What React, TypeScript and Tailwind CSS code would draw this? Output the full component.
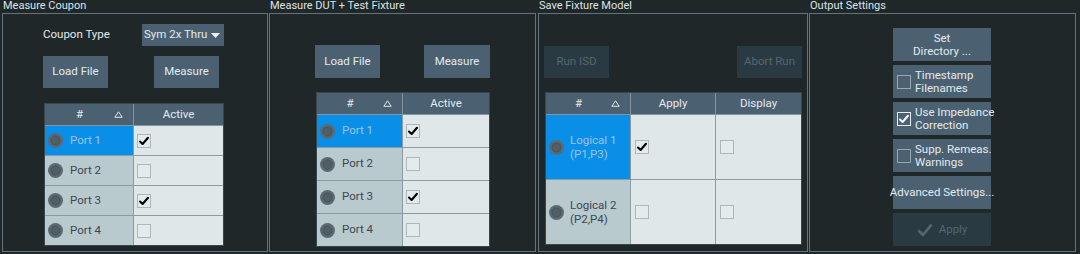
import React from "react";

const Circle = () => (
  <svg width="15" height="15" viewBox="0 0 15 15" className="shrink-0">
    <circle cx="7.5" cy="7.5" r="7.5" fill="#5c6971" />
    <circle cx="7.5" cy="7.5" r="4.5" fill="#515e66" stroke="#48545b" strokeWidth="1" />
  </svg>
);

const CheckMark = ({ color = "#000" }: { color?: string }) => (
  <svg width="12" height="12" viewBox="0 0 12 12">
    <path d="M2 6.5 L4.6 9 L10 2.8" fill="none" stroke={color} strokeWidth="2.1" strokeLinecap="round" strokeLinejoin="round" />
  </svg>
);

const TableCheck = ({ checked }: { checked: boolean }) => (
  <div className="w-[14px] h-[14px] border border-[#aab7bd] bg-[#e4ebed] flex items-center justify-center shrink-0">
    {checked && <CheckMark />}
  </div>
);

const SortTri = () => (
  <svg width="9" height="7" viewBox="0 0 9 7" className="shrink-0">
    <polygon points="4.5,0.8 8.2,6.3 0.8,6.3" fill="none" stroke="#dfe7ea" strokeWidth="1" />
  </svg>
);

const Btn = ({ children, className = "" }: { children: React.ReactNode; className?: string }) => (
  <div className={"bg-[#4b6171] text-[#e3eaed] flex items-center justify-center " + className}>{children}</div>
);

const DisBtn = ({ children, className = "" }: { children: React.ReactNode; className?: string }) => (
  <div className={"bg-[#293a42] text-[#56676f] flex items-center justify-center " + className}>{children}</div>
);

const Panel = ({ title, w, children }: { title: string; w: string; children: React.ReactNode }) => (
  <div className={"flex flex-col shrink-0 " + w}>
    <div className="h-[13px] leading-[12px] pl-[1px] text-[11px] text-[#dce4e7] whitespace-nowrap">{title}</div>
    <div className="h-[239px] border border-[#62737b] flex flex-col">{children}</div>
  </div>
);

const Header = ({ first, rest }: { first: string; rest: { label: string; w: string }[] }) => (
  <div className="flex h-[22px] bg-[#4b6171] border-b border-[#8696a0] text-[#e3eaed]">
    <div className={"flex items-center border-r border-[#8393a0] " + first}>
      <div className="flex-1 text-center">#</div>
      <div className="mr-[10px]"><SortTri /></div>
    </div>
    {rest.map((c, i) => (
      <div key={i} className={"flex items-center justify-center " + c.w + (i < rest.length - 1 ? " border-r border-[#8393a0]" : "")}>
        {c.label}
      </div>
    ))}
  </div>
);

const PortRow = ({ name, sel, checked, h, c1, top }: { name: string; sel: boolean; checked: boolean; h: string; c1: string; top: boolean }) => (
  <div className={"flex " + h + (top ? " border-t border-[#8b9ba4]" : "")}>
    <div className={"flex items-center pl-[3px] gap-[7px] border-r border-[#8b9ba4] " + c1 + (sel ? " bg-[#0a8fe8] text-[#9fc4e2]" : " bg-[#b9cacf] text-[#3b474e]")}>
      <Circle />
      <span>{name}</span>
    </div>
    <div className="flex-1 bg-[#dfe7e9] flex items-center pl-[3px]">
      <TableCheck checked={checked} />
    </div>
  </div>
);

const CbBtn = ({ lines, checked }: { lines: [string, string]; checked: boolean }) => (
  <Btn className="h-[33px] !justify-start pl-[4px] gap-[4px]">
    <div className={"w-[14px] h-[14px] border shrink-0 flex items-center justify-center " + (checked ? "border-[#e6edf0]" : "border-[#9ba8af]")}>
      {checked && <CheckMark color="#f2f5f6" />}
    </div>
    <div className="leading-[13px] whitespace-nowrap">
      <div>{lines[0]}</div>
      <div>{lines[1]}</div>
    </div>
  </Btn>
);

export default function App() {
  const ports = [
    { name: "Port 1", sel: true, checked: true },
    { name: "Port 2", sel: false, checked: false },
    { name: "Port 3", sel: false, checked: true },
    { name: "Port 4", sel: false, checked: false },
  ];
  return (
    <div className="w-[1080px] h-[254px] bg-[#1f2729] flex pl-[2px] text-[11.5px] text-[#e3eaed] overflow-hidden font-['Roboto',Arial,sans-serif]">
      {/* Panel 1 */}
      <Panel title="Measure Coupon" w="w-[266px]">
        <div className="flex items-center h-[22px] mt-[10px]">
          <div className="ml-[40px] w-[99px] text-[#e3eaed]">Coupon Type</div>
          <div className="w-[82px] h-[22px] bg-[#4b6171] flex items-center pl-[2px] pr-[2px]">
            <span className="flex-1 whitespace-nowrap">Sym 2x Thru</span>
            <svg width="9" height="5" viewBox="0 0 9 5" className="mr-[2px] shrink-0">
              <polygon points="0,0 9,0 4.5,5" fill="#f2f5f6" />
            </svg>
          </div>
        </div>
        <div className="flex mt-[10px]">
          <Btn className="ml-[40px] w-[65px] h-[32px]">Load File</Btn>
          <Btn className="ml-[46px] w-[65px] h-[32px]">Measure</Btn>
        </div>
        <div className="mt-[15px] ml-[41px] w-[180px] border border-[#38474e] flex flex-col">
          <Header first="w-[89px]" rest={[{ label: "Active", w: "flex-1" }]} />
          {ports.map((p, i) => (
            <PortRow key={i} {...p} h={i === 0 ? "h-[29px]" : "h-[30px]"} c1="w-[89px]" top={i > 0} />
          ))}
        </div>
      </Panel>

      {/* Panel 2 */}
      <Panel title="Measure DUT + Test Fixture" w="w-[267px] ml-[1px]">
        <div className="flex mt-[31px]">
          <Btn className="ml-[45px] w-[65px] h-[33px]">Load File</Btn>
          <Btn className="ml-[44px] w-[66px] h-[33px]">Measure</Btn>
        </div>
        <div className="mt-[14px] ml-[46px] w-[174px] border border-[#38474e] flex flex-col">
          <Header first="w-[86px]" rest={[{ label: "Active", w: "flex-1" }]} />
          {ports.map((p, i) => (
            <PortRow key={i} {...p} h={i === 0 ? "h-[32px]" : "h-[33px]"} c1="w-[86px]" top={i > 0} />
          ))}
        </div>
      </Panel>

      {/* Panel 3 */}
      <Panel title="Save Fixture Model" w="w-[270px] ml-[2px]">
        <div className="flex mt-[32px]">
          <DisBtn className="ml-[5px] w-[65px] h-[32px]">Run ISD</DisBtn>
          <DisBtn className="ml-[128px] w-[65px] h-[32px]">Abort Run</DisBtn>
        </div>
        <div className="mt-[14px] ml-[6px] w-[257px] border border-[#38474e] flex flex-col">
          <Header
            first="w-[85px]"
            rest={[
              { label: "Apply", w: "w-[85px]" },
              { label: "Display", w: "flex-1" },
            ]}
          />
          {[
            { a: "Logical 1", b: "(P1,P3)", sel: true, ap: true },
            { a: "Logical 2", b: "(P2,P4)", sel: false, ap: false },
          ].map((r, i) => (
            <div key={i} className={"flex " + (i === 0 ? "h-[64px]" : "h-[65px] border-t border-[#8b9ba4]")}>
              <div className={"w-[85px] flex items-center pl-[3px] gap-[6px] border-r border-[#8b9ba4] " + (r.sel ? "bg-[#0a8fe8] text-[#9fc4e2]" : "bg-[#b9cacf] text-[#3b474e]")}>
                <Circle />
                <div className="leading-[14px]">
                  <div>{r.a}</div>
                  <div>{r.b}</div>
                </div>
              </div>
              <div className="w-[85px] bg-[#dfe7e9] flex items-center pl-[4px] border-r border-[#8b9ba4]">
                <TableCheck checked={r.ap} />
              </div>
              <div className="flex-1 bg-[#dfe7e9] flex items-center pl-[4px]">
                <TableCheck checked={false} />
              </div>
            </div>
          ))}
        </div>
      </Panel>

      {/* Panel 4 */}
      <Panel title="Output Settings" w="w-[267px] ml-[1px]">
        <div className="flex flex-col ml-[83px] w-[98px] mt-[14px] gap-[4px]">
          <Btn className="h-[33px] flex-col leading-[13px]">
            <div>Set</div>
            <div>Directory ...</div>
          </Btn>
          <CbBtn lines={["Timestamp", "Filenames"]} checked={false} />
          <CbBtn lines={["Use Impedance", "Correction"]} checked={true} />
          <CbBtn lines={["Supp. Remeas.", "Warnings"]} checked={false} />
          <Btn className="h-[33px] whitespace-nowrap">Advanced Settings...</Btn>
          <DisBtn className="h-[33px] gap-[6px]">
            <svg width="16" height="14" viewBox="0 0 16 14">
              <path d="M1.5 7.5 L6 12 L14.5 1.5" fill="none" stroke="#56676f" strokeWidth="2.6" strokeLinejoin="round" />
            </svg>
            <span>Apply</span>
          </DisBtn>
        </div>
      </Panel>
    </div>
  );
}
